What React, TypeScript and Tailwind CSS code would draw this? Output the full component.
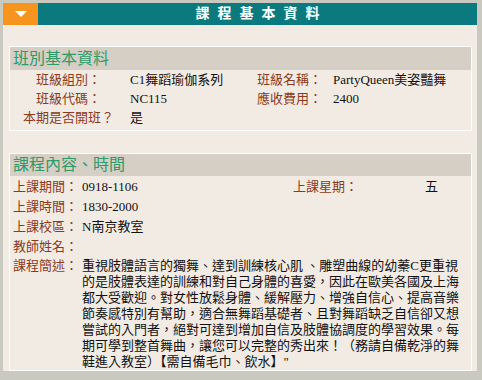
import React from "react";

const FONT = "font-['Liberation_Serif','Noto_Sans_CJK_TC',serif]";
const LABEL = "text-[#8a3b1c]";
const VALUE = "text-[#111111]";

const descLines = [
  "重視肢體語言的獨舞、達到訓練核心肌 、雕塑曲線的幼蓁C更重視",
  "的是肢體表達的訓練和對自己身體的喜愛，因此在歐美各國及上海",
  "都大受歡迎。對女性放鬆身體、緩解壓力、增強自信心、提高音樂",
  "節奏感特別有幫助，適合無舞蹈基礎者、且對舞蹈缺乏自信卻又想",
  "嘗試的入門者，絕對可達到增加自信及肢體協調度的學習效果。每",
  "期可學到整首舞曲，讓您可以完整的秀出來！（務請自備乾淨的舞",
  "鞋進入教室）【需自備毛巾、飲水】\"",
];

export default function App() {
  return (
    <div
      className={`w-[482px] h-[380px] bg-[#c9c9bf] pt-[3px] pl-[3px] pr-[5px] pb-[9px] flex flex-col ${FONT}`}
    >
      <div className="flex h-[22px] shrink-0">
        <div className="w-[35px] bg-[#f7941d] flex items-center justify-center">
          <svg width="12" height="6" viewBox="0 0 12 6">
            <polygon points="0,0 12,0 6,6" fill="#ffffff" />
          </svg>
        </div>
        <div className="flex-1 bg-[#0b7a7f] text-white font-bold text-[14px] leading-none flex items-center justify-center tracking-[8px] pl-[8px]">
          課程基本資料
        </div>
      </div>

      <div className="flex-1 bg-[#f1ebe4] pl-[6px] pr-[5px] pt-[21px] flex flex-col">
        {/* Section 1 */}
        <div className="border border-white bg-[#f1ebe4]">
          <div className="h-[23px] bg-[#d6cfc6] flex items-center pl-[3px] text-[16px] text-[#2f9a68] leading-none">
            班別基本資料
          </div>
          <div className="grid grid-cols-[117px_125px_75px_1fr] text-[13px] leading-none pb-[3px]">
            <div className={`h-[19px] flex items-center justify-center ${LABEL}`}>班級組別：</div>
            <div className={`h-[19px] flex items-center pl-[3px] ${VALUE}`}>C1舞蹈瑜伽系列</div>
            <div className={`h-[19px] flex items-center justify-center ${LABEL}`}>班級名稱：</div>
            <div className={`h-[19px] flex items-center pl-[6px] ${VALUE}`}>PartyQueen美姿豔舞</div>

            <div className={`h-[19px] flex items-center justify-center ${LABEL}`}>班級代碼：</div>
            <div className={`h-[19px] flex items-center pl-[3px] ${VALUE}`}>NC115</div>
            <div className={`h-[19px] flex items-center justify-center ${LABEL}`}>應收費用：</div>
            <div className={`h-[19px] flex items-center pl-[6px] ${VALUE}`}>2400</div>

            <div className={`h-[19px] flex items-center justify-center ${LABEL}`}>本期是否開班？</div>
            <div className={`h-[19px] flex items-center pl-[3px] ${VALUE}`}>是</div>
            <div />
            <div />
          </div>
        </div>

        {/* Section 2 */}
        <div className="mt-[22px] border border-white bg-[#f1ebe4]">
          <div className="h-[22px] bg-[#d6cfc6] flex items-center pl-[3px] text-[16px] text-[#2f9a68] leading-none">
            課程內容、時間
          </div>
          <div className="grid grid-cols-[72px_211px_132px_1fr] text-[13px] leading-none">
            <div className={`h-[20px] flex items-center pl-[3px] ${LABEL}`}>上課期間：</div>
            <div className={`h-[20px] flex items-center ${VALUE}`}>0918-1106</div>
            <div className={`h-[20px] flex items-center ${LABEL}`}>上課星期：</div>
            <div className={`h-[20px] flex items-center ${VALUE}`}>五</div>

            <div className={`h-[20px] flex items-center pl-[3px] ${LABEL}`}>上課時間：</div>
            <div className={`h-[20px] flex items-center ${VALUE}`}>1830-2000</div>
            <div />
            <div />

            <div className={`h-[20px] flex items-center pl-[3px] ${LABEL}`}>上課校區：</div>
            <div className={`h-[20px] flex items-center ${VALUE}`}>N南京教室</div>
            <div />
            <div />

            <div className={`h-[20px] flex items-center pl-[3px] ${LABEL}`}>教師姓名：</div>
            <div className={`h-[20px] flex items-center ${VALUE}`}></div>
            <div />
            <div />
          </div>
          <div className="grid grid-cols-[72px_1fr] text-[13px] leading-[16px] pt-[2px]">
            <div className={`pl-[3px] ${LABEL}`}>課程簡述：</div>
            <div className={`flex flex-col ${VALUE}`}>
              {descLines.map((l, i) => (
                <div key={i} className="whitespace-pre h-[16px]">
                  {l}
                </div>
              ))}
            </div>
          </div>
        </div>
      </div>
    </div>
  );
}
